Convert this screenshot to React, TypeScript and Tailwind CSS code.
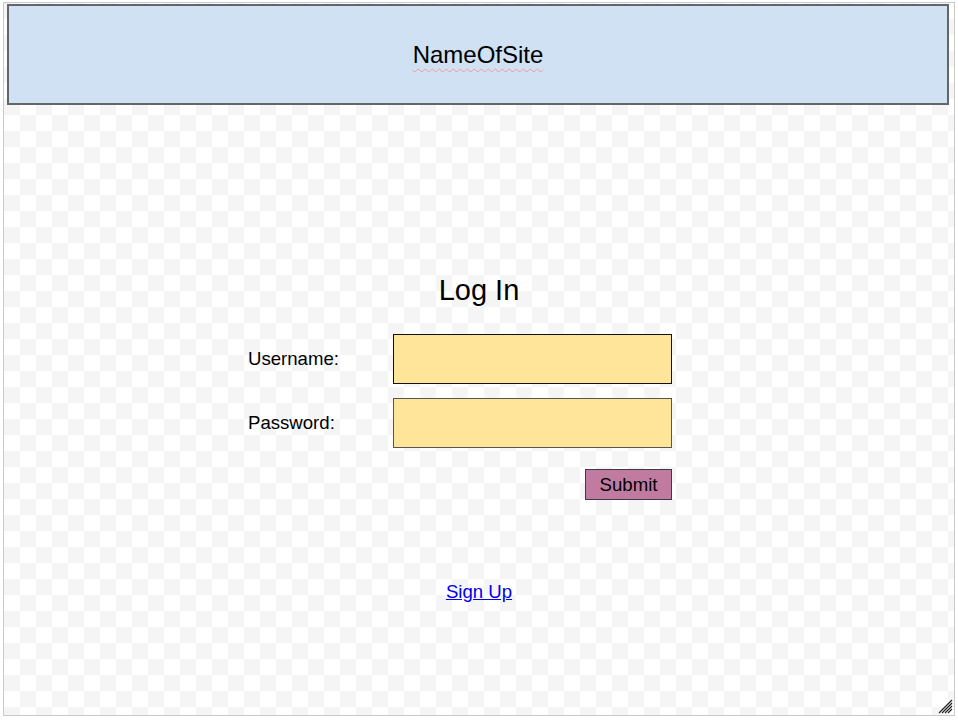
import React from 'react'

export default function App() {
  return (
    <div className="w-[958px] h-[720px] bg-white pt-[2px] pl-[3px]" style={{ fontFamily: "'Liberation Sans', Arial, sans-serif" }}>
      {/* Canvas */}
      <div className="relative w-[952px] h-[714px] border border-[#c9c9c9] bg-[conic-gradient(white_25%,#f5f5f5_0_50%,white_0_75%,#f5f5f5_0)] bg-size-[32px_32px] flex flex-col">
        {/* Header */}
        <div className="mt-[1px] ml-[3px] w-[942px] h-[101px] border-2 border-[#62666b] bg-[#cfe1f3] flex items-center justify-center">
          <span className="text-[24px] text-black underline decoration-wavy decoration-[#f29a9a] decoration-1 underline-offset-[5px]">NameOfSite</span>
        </div>

        {/* Title */}
        <div className="mt-[169px] text-center text-[29px] leading-[33px] text-black">Log In</div>

        {/* Form */}
        <div className="ml-[244px] mt-[27px] w-[424px] flex flex-col">
          <div className="flex items-center">
            <label className="w-[145px] text-[18.6px] text-black">Username:</label>
            <div className="w-[279px] h-[50px] border border-[#111] bg-[#ffe599]" />
          </div>
          <div className="flex items-center mt-[14px]">
            <label className="w-[145px] text-[18.6px] text-black">Password:</label>
            <div className="w-[279px] h-[50px] border border-[#555] bg-[#ffe599]" />
          </div>
          <div className="flex justify-end mt-[21px]">
            <button className="w-[87px] h-[31px] border border-[#3c3c3c] bg-[#c27ba0] text-[18.6px] text-black flex items-center justify-center">Submit</button>
          </div>
        </div>

        {/* Sign up */}
        <div className="mt-[81px] text-center leading-[22px]">
          <a href="#" className="text-[18.6px] text-[#0000ee] underline">Sign Up</a>
        </div>

        {/* Resize grip */}
        <svg className="absolute right-[1px] bottom-[1px]" width="16" height="16" viewBox="0 0 16 16">
          <path d="M2 15 L15 2 M5 15 L15 5 M8 15 L15 8 M11 15 L15 11" stroke="#222" strokeWidth="1.2" />
        </svg>
      </div>
    </div>
  )
}
